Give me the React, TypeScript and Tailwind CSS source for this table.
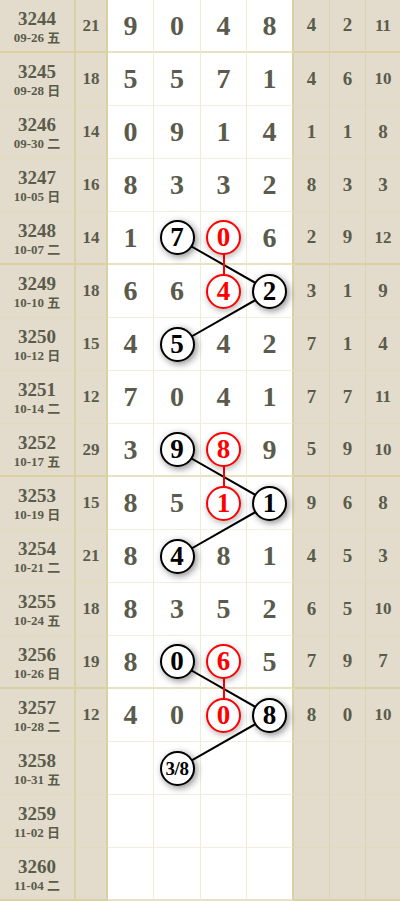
type Row = { p: string; d: string; s: string; n: string[]; r: string[] };

// "*" = black ball, "!" = red ball
const rows: Row[] = [
  { p: "3244", d: "09-26 五", s: "21", n: ["9", "0", "4", "8"], r: ["4", "2", "11"] },
  { p: "3245", d: "09-28 日", s: "18", n: ["5", "5", "7", "1"], r: ["4", "6", "10"] },
  { p: "3246", d: "09-30 二", s: "14", n: ["0", "9", "1", "4"], r: ["1", "1", "8"] },
  { p: "3247", d: "10-05 日", s: "16", n: ["8", "3", "3", "2"], r: ["8", "3", "3"] },
  { p: "3248", d: "10-07 二", s: "14", n: ["1", "*7", "!0", "6"], r: ["2", "9", "12"] },
  { p: "3249", d: "10-10 五", s: "18", n: ["6", "6", "!4", "*2"], r: ["3", "1", "9"] },
  { p: "3250", d: "10-12 日", s: "15", n: ["4", "*5", "4", "2"], r: ["7", "1", "4"] },
  { p: "3251", d: "10-14 二", s: "12", n: ["7", "0", "4", "1"], r: ["7", "7", "11"] },
  { p: "3252", d: "10-17 五", s: "29", n: ["3", "*9", "!8", "9"], r: ["5", "9", "10"] },
  { p: "3253", d: "10-19 日", s: "15", n: ["8", "5", "!1", "*1"], r: ["9", "6", "8"] },
  { p: "3254", d: "10-21 二", s: "21", n: ["8", "*4", "8", "1"], r: ["4", "5", "3"] },
  { p: "3255", d: "10-24 五", s: "18", n: ["8", "3", "5", "2"], r: ["6", "5", "10"] },
  { p: "3256", d: "10-26 日", s: "19", n: ["8", "*0", "!6", "5"], r: ["7", "9", "7"] },
  { p: "3257", d: "10-28 二", s: "12", n: ["4", "0", "!0", "*8"], r: ["8", "0", "10"] },
  { p: "3258", d: "10-31 五", s: "", n: ["", "*3/8", "", ""], r: ["", "", ""] },
  { p: "3259", d: "11-02 日", s: "", n: ["", "", "", ""], r: ["", "", ""] },
  { p: "3260", d: "11-04 二", s: "", n: ["", "", "", ""], r: ["", "", ""] },
];

const digitW = ["w-[46px]", "w-[47px]", "w-[46px]", "w-[47px]"];
const rightW = ["w-[36px]", "w-[36px]", "w-[34px]"];

// centres of the digit columns / rows, for the link lines
const cx = [131, 177.5, 224, 270.5];
const cy = (i: number) => i * 53 + 26.5;

const black: [number, number, number, number][] = [
  [4, 1, 5, 3],
  [5, 3, 6, 1],
  [8, 1, 9, 3],
  [9, 3, 10, 1],
  [12, 1, 13, 3],
  [13, 3, 14, 1],
];
const red: [number, number][] = [
  [4, 5],
  [8, 9],
  [12, 13],
];

function Cell({ v }: { v: string }) {
  if (v.startsWith("*") || v.startsWith("!")) {
    const isRed = v[0] === "!";
    const t = v.slice(1);
    return (
      <div
        className={
          isRed
            ? "relative z-10 flex h-[35px] w-[35px] items-center justify-center rounded-full border-2 border-[#f00] bg-white font-bold text-[#f00] shadow-[1px_2px_6px_rgba(0,0,0,0.3)]"
            : "relative z-10 flex h-[35px] w-[35px] items-center justify-center rounded-full border-2 border-black bg-white font-bold text-black shadow-[2px_2px_7px_rgba(0,0,0,0.45)]"
        }
      >
        <span className={t.length > 1 ? "text-[19px] leading-none tracking-tight" : "text-[27px] leading-none"}>{t}</span>
      </div>
    );
  }
  return <span className="text-[28px] font-bold text-[#5a5b4c]">{v}</span>;
}

export default function App() {
  return (
    <div className="relative w-[400px] font-['Liberation_Serif','Noto_Sans_CJK_SC',serif]">
      {rows.map((row, i) => {
        const thick = i % 4 === 0;
        const bb = thick ? "border-b-2 border-b-[#d9d0a4]" : "border-b border-b-[#e2dab8]";
        const wb = thick ? "border-b-2 border-b-[#e8e1c2]" : "border-b border-b-[#f2eedd]";
        return (
          <div key={row.p} className="flex h-[53px]">
            <div className={`flex w-[76px] flex-col items-center justify-center border-r-2 border-r-[#d9d0a4] bg-[#e3dbcb] pt-[2px] ${bb}`}>
              <span className="text-[19px] font-bold leading-[21px] text-[#5a5b4c]">{row.p}</span>
              <span className="text-[13px] font-bold leading-[17px] text-[#5a5b4c]">{row.d}</span>
            </div>
            <div className={`flex w-[32px] items-center justify-center border-r-2 border-r-[#d9d0a4] bg-[#e3dbcb] text-[17px] font-bold text-[#5a5b4c] ${bb}`}>
              {row.s}
            </div>
            {row.n.map((v, j) => (
              <div
                key={j}
                className={`flex ${digitW[j]} items-center justify-center bg-white ${wb} ${
                  j === 3 ? "border-r-2 border-r-[#d9d0a4]" : "border-r border-r-[#f0ecd9]"
                }`}
              >
                <Cell v={v} />
              </div>
            ))}
            {row.r.map((v, j) => (
              <div
                key={j}
                className={`flex ${rightW[j]} items-center justify-center bg-[#e3dbcb] font-bold text-[#5a5b4c] ${bb} ${
                  j < 2 ? "border-r border-r-[#ddd4ae]" : ""
                } ${v.length > 1 ? "text-[17px]" : "text-[19px]"}`}
              >
                {v}
              </div>
            ))}
          </div>
        );
      })}
      <svg className="pointer-events-none absolute left-0 top-0" width="400" height="901">
        {black.map(([r1, c1, r2, c2], k) => (
          <line key={k} x1={cx[c1]} y1={cy(r1)} x2={cx[c2]} y2={cy(r2)} stroke="#000" strokeWidth="2" />
        ))}
        {red.map(([r1, r2], k) => (
          <line key={k} x1={cx[2]} y1={cy(r1)} x2={cx[2]} y2={cy(r2)} stroke="#f00" strokeWidth="2" />
        ))}
      </svg>
    </div>
  );
}
